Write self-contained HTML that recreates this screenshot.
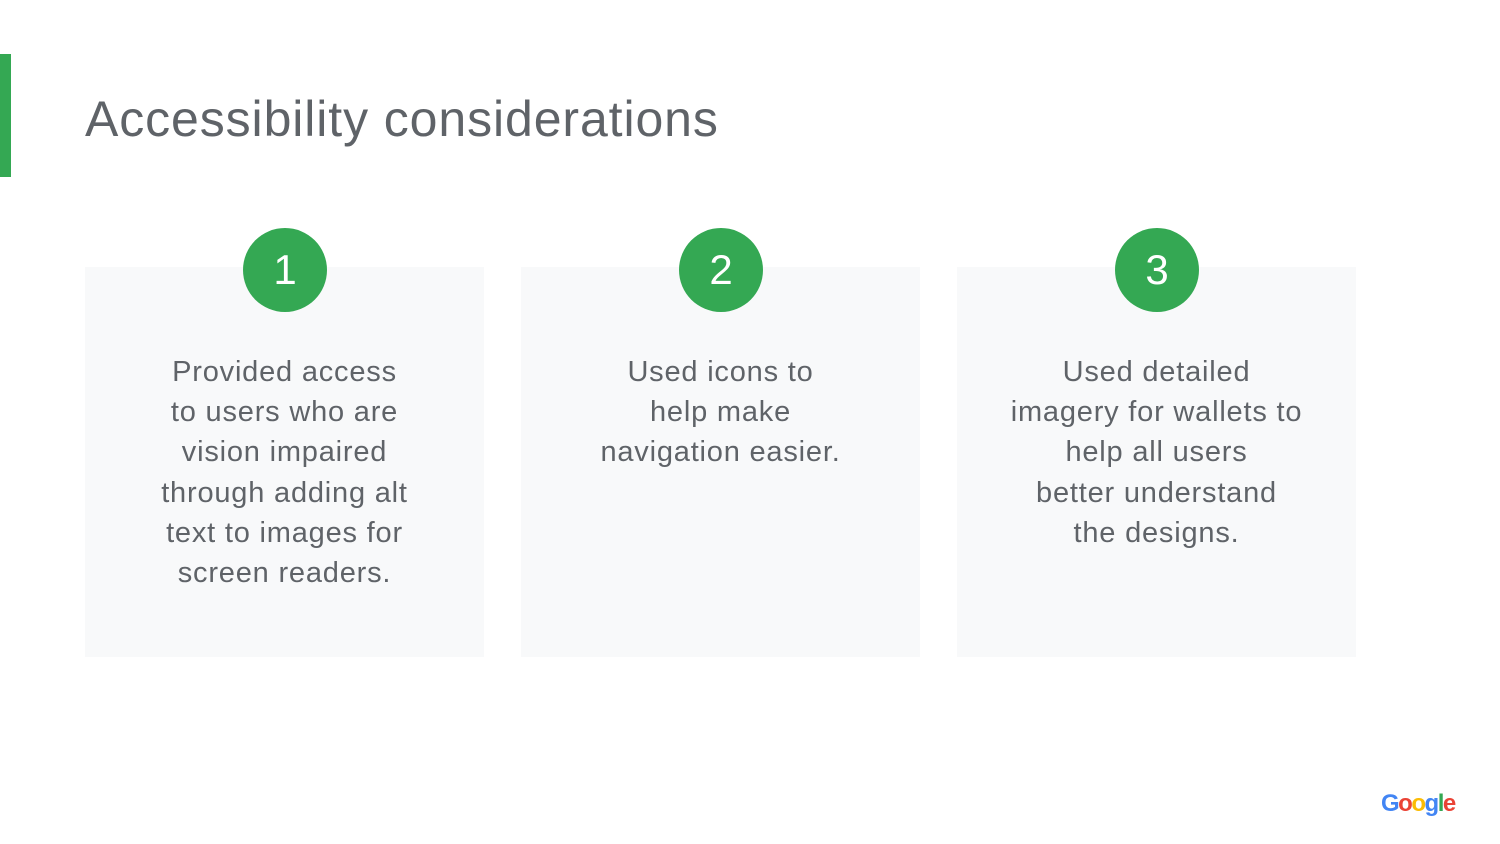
<!DOCTYPE html>
<html><head><style>
body{margin:0;width:1500px;height:844px;background:#fff;position:relative;overflow:hidden;font-family:"Liberation Sans",sans-serif;color:#5f6368}
.bar{position:absolute;left:0;top:54px;width:11px;height:123px;background:#34a853}
h1{position:absolute;left:85px;top:89px;margin:0;font-weight:normal;font-size:50px;line-height:60px;letter-spacing:0.9px;color:#5f6368}
.card{position:absolute;top:267px;width:399px;height:390px;background:#f8f9fa}
.circ{position:absolute;top:228px;width:84px;height:84px;border-radius:50%;background:#34a853;color:#fff;font-size:42px;line-height:84px;text-align:center}
.t{position:absolute;top:352px;width:399px;text-align:center;font-size:29px;line-height:40.2px;letter-spacing:0.8px}
.g{position:absolute;left:1381px;top:790px;font-size:24px;font-weight:bold;letter-spacing:-1.5px}
</style></head><body>
<div class="bar"></div>
<h1>Accessibility considerations</h1>
<div class="card" style="left:85px"></div>
<div class="card" style="left:521px"></div>
<div class="card" style="left:957px"></div>
<div class="circ" style="left:243px">1</div>
<div class="circ" style="left:679px">2</div>
<div class="circ" style="left:1115px">3</div>
<div class="t" style="left:85px">Provided access<br>to users who are<br>vision impaired<br>through adding alt<br>text to images for<br>screen readers.</div>
<div class="t" style="left:521px">Used icons to<br>help make<br>navigation easier.</div>
<div class="t" style="left:957px">Used detailed<br>imagery for wallets to<br>help all users<br>better understand<br>the designs.</div>
<div class="g"><span style="color:#4285f4">G</span><span style="color:#ea4335">o</span><span style="color:#fbbc05">o</span><span style="color:#4285f4">g</span><span style="color:#34a853">l</span><span style="color:#ea4335">e</span></div>
</body></html>
